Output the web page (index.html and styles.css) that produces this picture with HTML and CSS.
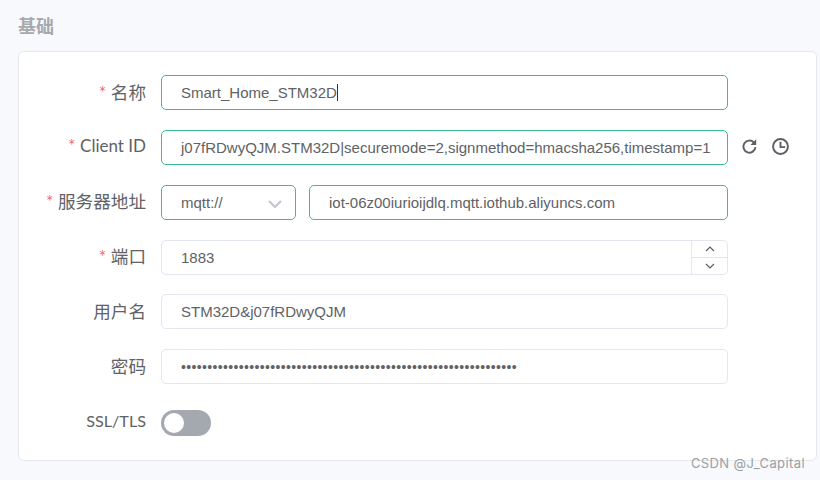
FILE: index.html
```html
<!DOCTYPE html>
<html lang="en">
<head>
  <meta charset="UTF-8">
  <title>基础</title>
  <link rel="stylesheet" href="styles.css">
</head>
<body>

  <h2 class="section-title">基础</h2>

  <form class="card">
    <div class="row">
      <label class="label"><span class="req">*</span> 名称</label>
      <div class="input active">Smart_Home_STM32D<span class="caret"></span></div>
    </div>

    <div class="row">
      <label class="label"><span class="req">*</span> <span class="latin">Client ID</span></label>
      <div class="input active">j07fRDwyQJM.STM32D|securemode=2,signmethod=hmacsha256,timestamp=1</div>
      <div class="tools">
        <svg class="icon" viewBox="0 0 16 16">
          <path d="M13.6 8.6a5.7 5.7 0 1 1-1.7-4.6" />
          <path class="solid" d="M14.3 1.2v5.4H8.9z" />
        </svg>
        <svg class="icon" viewBox="0 0 16 16">
          <circle cx="8" cy="8" r="7" />
          <path d="M8 3.6V8.6h4.4" />
        </svg>
      </div>
    </div>

    <div class="row">
      <label class="label"><span class="req">*</span> 服务器地址</label>
      <div class="server">
        <div class="input active protocol">
          mqtt://
          <svg class="chevron" viewBox="0 0 14 8">
            <path d="M1 1l6 6 6-6" />
          </svg>
        </div>
        <div class="input active host">iot-06z00iurioijdlq.mqtt.iothub.aliyuncs.com</div>
      </div>
    </div>

    <div class="row">
      <label class="label"><span class="req">*</span> 端口</label>
      <div class="input number">
        1883
        <div class="stepper">
          <div class="step">
            <svg viewBox="0 0 10 6"><path d="M1 5l4-4 4 4" /></svg>
          </div>
          <div class="step step-down">
            <svg viewBox="0 0 10 6"><path d="M1 1l4 4 4-4" /></svg>
          </div>
        </div>
      </div>
    </div>

    <div class="row">
      <label class="label">用户名</label>
      <div class="input">STM32D&amp;j07fRDwyQJM</div>
    </div>

    <div class="row">
      <label class="label">密码</label>
      <div class="input password">••••••••••••••••••••••••••••••••••••••••••••••••••••••••••••••••</div>
    </div>

    <div class="row">
      <label class="label"><span class="latin-sm">SSL/TLS</span></label>
      <div class="switch"><span class="knob"></span></div>
    </div>
  </form>

  <div class="watermark">CSDN @J_Capital</div>

</body>
</html>
```

FILE: styles.css
```css
html, body {
  height: 100%;
}
body {
  margin: 0;
  padding: 16px 3px 0 18px;
  background-color: #f8f9fd;
  color: #606266;
  font-family: "Liberation Sans", "Noto Sans CJK SC", sans-serif;
  overflow: hidden;
  position: relative;
  box-sizing: border-box;
}
.section-title {
  margin: 0 0 12px;
  font-size: 18px;
  line-height: 23px;
  font-weight: bold;
  color: #a6a9ad;
}
.card {
  box-sizing: border-box;
  height: 410px;
  padding: 23px 0 0;
  background: #fff;
  border: 1px solid #e6e8f0;
  border-radius: 6px;
  display: flex;
  flex-direction: column;
  gap: 19.85px;
}
.row {
  display: flex;
  align-items: center;
  height: 35px;
}
.label {
  width: 127px;
  margin-right: 15px;
  margin-top: -3px;
  flex: none;
  text-align: right;
  font-family: "Lato", "Noto Sans CJK SC", sans-serif;
  font-size: 17.6px;
  color: #606266;
}
.latin {
  font-size: 17px;
}
.latin-sm {
  font-size: 16.2px;
}
.req {
  color: #f56c6c;
}
.input {
  box-sizing: border-box;
  width: 567px;
  height: 35px;
  padding: 0 19px;
  flex: none;
  display: flex;
  align-items: center;
  font-size: 15px;
  color: #606266;
  border: 1px solid #e4e6ef;
  border-radius: 5px;
  white-space: nowrap;
  overflow: hidden;
}
.active {
  border-color: #3dbd8d;
}
.caret {
  width: 1px;
  height: 17px;
  background: #333;
}
.tools {
  display: flex;
  gap: 14px;
  margin-left: 13px;
}
.icon {
  width: 17px;
  height: 17px;
  margin-top: -2px;
  fill: none;
  stroke: #5c5f66;
  stroke-width: 1.8;
}
.icon .solid {
  fill: #5c5f66;
  stroke: none;
}
.server {
  width: 567px;
  display: flex;
  gap: 13px;
}
.protocol {
  width: 135px;
  justify-content: space-between;
  padding-right: 13px;
}
.host {
  flex: 1;
  width: auto;
}
.chevron {
  width: 14px;
  height: 8px;
  margin-top: 3px;
  fill: none;
  stroke: #c0c4cc;
  stroke-width: 2;
}
.number {
  position: relative;
}
.stepper {
  position: absolute;
  top: 0;
  right: 0;
  bottom: 0;
  width: 35px;
  display: flex;
  flex-direction: column;
  border-left: 1px solid #e4e6ef;
}
.step {
  flex: 1;
  display: flex;
  align-items: center;
  justify-content: center;
}
.step-down {
  border-top: 1px solid #e4e6ef;
}
.step svg {
  width: 10px;
  height: 6px;
  fill: none;
  stroke: #5c5f66;
  stroke-width: 1.2;
}
.password {
  font-size: 14px;
  letter-spacing: 0.35px;
}
.switch {
  box-sizing: border-box;
  width: 50px;
  height: 26px;
  margin-top: 3px;
  padding: 2px;
  border-radius: 13px;
  background: #a4a9b0;
}
.knob {
  display: block;
  width: 20px;
  height: 20px;
  margin: 1px 0 0 1px;
  border-radius: 50%;
  background: #fff;
}
.watermark {
  position: absolute;
  right: 15px;
  bottom: 9px;
  font-family: "Inter", "Liberation Sans", sans-serif;
  font-size: 13px;
  color: #9d9fa3;
  letter-spacing: 0.4px;
}
```
